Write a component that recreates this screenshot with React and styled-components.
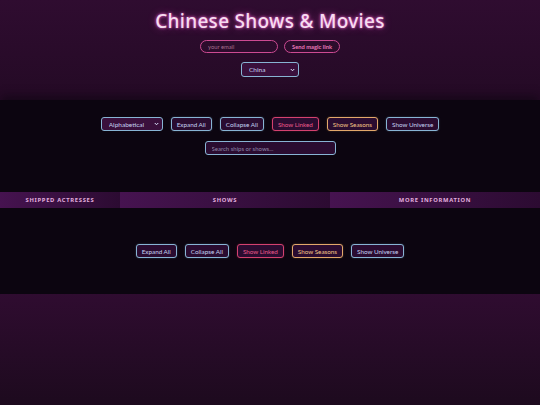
import React from "react";
import styled, { createGlobalStyle } from "styled-components";

const GlobalStyle = createGlobalStyle`
  body {
    margin: 0;
    background: #1c091c;
    font-family: "Lato", "Liberation Sans", sans-serif;
  }
  * { box-sizing: border-box; }
`;

const tones = {
  blue: { border: "#88b4d4", text: "#c4d2f2" },
  pink: { border: "#d4416f", text: "#ec5a8a" },
  orange: { border: "#e2a86a", text: "#f4c486" },
};

const Page = styled.div`
  min-height: 405px;
  background: #1c091c;
`;

const Header = styled.header`
  height: 100px;
  display: flex;
  flex-direction: column;
  align-items: center;
  padding-top: 8px;
  background: linear-gradient(180deg, #2f0c30 0%, #240a25 100%);
`;

const Title = styled.h1`
  margin: 0;
  font-family: "Noto Sans", "DejaVu Sans", sans-serif;
  font-weight: 500;
  font-size: 19px;
  line-height: 26px;
  letter-spacing: 0.3px;
  color: #f6dcf0;
  text-shadow: 0 0 3px #ff6ad8, 0 0 8px rgba(255, 80, 210, 0.45);
`;

const LoginRow = styled.form`
  display: flex;
  gap: 6px;
  margin-top: 6px;
`;

const EmailInput = styled.input`
  width: 78px;
  height: 13px;
  padding: 0 7px;
  border: 1px solid #cc4a92;
  border-radius: 8px;
  background: #2c0c2c;
  color: #e8b0d0;
  font: 5.8px "Lato", sans-serif;
  outline: none;
  &::placeholder { color: #a8708e; }
`;

const MagicButton = styled.button`
  height: 13px;
  width: 56px;
  padding: 0;
  border: 1px solid #cc4a92;
  border-radius: 8px;
  background: #2c0c2c;
  color: #e878b8;
  font: 700 5.8px "Lato", sans-serif;
`;

const SelectWrap = styled.div`
  position: relative;
  width: ${(p) => p.$width}px;
  margin-top: ${(p) => p.$top || 0}px;
  svg {
    position: absolute;
    right: 4px;
    top: 50%;
    transform: translateY(-50%);
    pointer-events: none;
  }
`;

const Select = styled.select`
  display: block;
  appearance: none;
  width: 100%;
  height: ${(p) => p.$height}px;
  padding: 0 0 0 ${(p) => p.$pad}px;
  border: 1px solid #88b4d4;
  border-radius: 3px;
  background: #3a103c;
  color: #c4d2f2;
  font: 6.5px "Lato", sans-serif;
  outline: none;
`;

const Chevron = () => (
  <svg width="5" height="4" viewBox="0 0 10 8">
    <path d="M1.5 2 L5 5.5 L8.5 2" fill="none" stroke="#dde6ff" strokeWidth="2" />
  </svg>
);

const Panel = styled.section`
  background: #0c0510;
  box-shadow: 0 -6px 8px -2px rgba(12, 5, 16, 0.55);
`;

const Controls = styled.div`
  height: ${(p) => p.$height}px;
  display: flex;
  flex-direction: column;
  align-items: center;
  padding-top: ${(p) => p.$top}px;
  gap: 10px;
`;

const ButtonRow = styled.div`
  display: flex;
  align-items: center;
  gap: ${(p) => p.$gap}px;
`;

const ToolButton = styled.button`
  height: 14px;
  padding: 0 5px;
  border: 1px solid ${(p) => tones[p.$tone].border};
  border-radius: 3px;
  background: #2a0c30;
  color: ${(p) => tones[p.$tone].text};
  font: 6.3px "Lato", sans-serif;
  white-space: nowrap;
  box-shadow: 0 0 2px ${(p) => tones[p.$tone].border}55;
`;

const Search = styled.input`
  width: 131px;
  height: 14px;
  padding: 0 6px;
  border: 1px solid #88b4d4;
  border-radius: 3px;
  background: #2a0c30;
  color: #c4d2f2;
  font: 6px "Lato", sans-serif;
  outline: none;
  &::placeholder { color: #8e86a8; }
`;

const Tabs = styled.nav`
  margin-top: 10px;
  display: grid;
  grid-template-columns: 120px 210px 210px;
  height: 16px;
`;

const Tab = styled.div`
  display: flex;
  align-items: center;
  justify-content: center;
  background: linear-gradient(90deg, #461350 0%, #3a1042 45%, #2c0b32 100%);
  color: #e2aede;
  font: 700 5.8px "Noto Sans", "DejaVu Sans", sans-serif;
  letter-spacing: 0.7px;
  text-transform: uppercase;
`;

const Footer = styled.div`
  height: 111px;
  background: linear-gradient(180deg, #2f0c30 0%, #1d0a1e 100%);
`;

const toolButtons = [
  { label: "Expand All", tone: "blue" },
  { label: "Collapse All", tone: "blue" },
  { label: "Show Linked", tone: "pink" },
  { label: "Show Seasons", tone: "orange" },
  { label: "Show Universe", tone: "blue" },
];

const ToolButtons = () =>
  toolButtons.map((b) => (
    <ToolButton key={b.label} $tone={b.tone}>
      {b.label}
    </ToolButton>
  ));

export default function App() {
  return (
    <>
      <GlobalStyle />
      <Page>
        <Header>
          <Title>Chinese Shows &amp; Movies</Title>
          <LoginRow onSubmit={(e) => e.preventDefault()}>
            <EmailInput placeholder="your email" />
            <MagicButton>Send magic link</MagicButton>
          </LoginRow>
          <SelectWrap $width={58} $top={9}>
            <Select $height={15} $pad={7} defaultValue="China">
              <option>China</option>
              <option>Taiwan</option>
              <option>Thailand</option>
            </Select>
            <Chevron />
          </SelectWrap>
        </Header>

        <Panel>
          <Controls $height={82} $top={17}>
            <ButtonRow $gap={8}>
              <SelectWrap $width={62}>
                <Select $height={14} $pad={7} defaultValue="Alphabetical">
                  <option>Alphabetical</option>
                  <option>Newest</option>
                </Select>
                <Chevron />
              </SelectWrap>
              <ToolButtons />
            </ButtonRow>
            <Search placeholder="Search ships or shows..." />
          </Controls>

          <Tabs>
            <Tab>Shipped Actresses</Tab>
            <Tab>Shows</Tab>
            <Tab>More Information</Tab>
          </Tabs>

          <Controls $height={86} $top={36}>
            <ButtonRow $gap={8}>
              <ToolButtons />
            </ButtonRow>
          </Controls>
        </Panel>

        <Footer />
      </Page>
    </>
  );
}
